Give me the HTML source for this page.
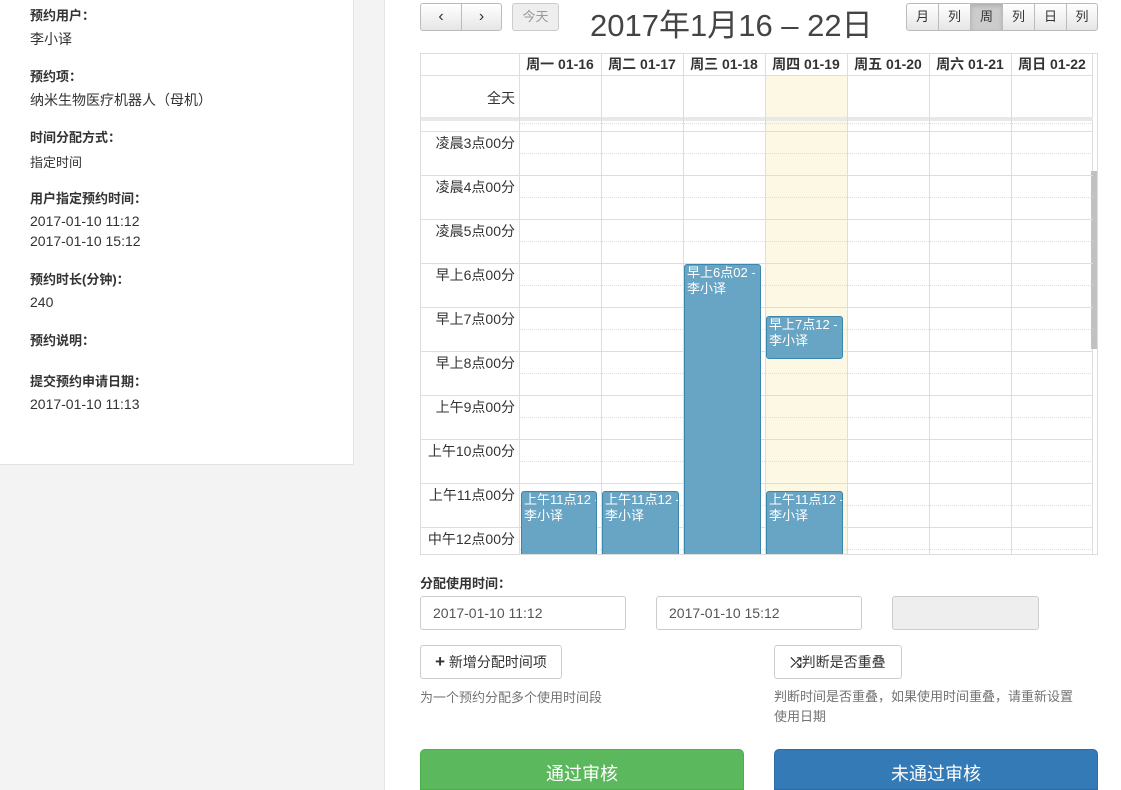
<!DOCTYPE html>
<html style="width:1121px;height:790px;overflow:hidden"><head><meta charset="utf-8"><style>
*{box-sizing:border-box;margin:0;padding:0}
body{width:1121px;height:790px;overflow:hidden;background:#f3f3f3;font-family:"Liberation Sans","Noto Sans CJK SC",sans-serif;color:#333;font-size:14px;position:relative}
.a{position:absolute;white-space:nowrap}
.lp{position:absolute;left:0;top:0;width:354px;height:465px;background:#fff;border-right:1px solid #e3e3e3;border-bottom:1px solid #e3e3e3}
.rp{position:absolute;left:384px;top:0;width:737px;height:790px;background:#fff;border-left:1px solid #e6e6e6}
.b{font-weight:bold;font-size:13px}
.btn{position:absolute;border:1px solid #bbb;border-radius:3px;background:linear-gradient(#fff,#e6e6e6);font-size:13px;text-align:center;color:#333}
.cal{position:absolute;left:420px;top:53px;width:678px;height:502px;border:1px solid #ddd;overflow:hidden}
.vl{position:absolute;top:0;width:1px;height:502px;background:#ddd}
.hl{position:absolute;left:98px;width:574px;height:1px;background:#ddd}
.dl{position:absolute;left:98px;width:574px;height:0;border-top:1px dotted #ddd}
.lbl{position:absolute;left:0;width:94px;text-align:right;font-size:14px;color:#333}
.ev{position:absolute;background:#68a4c4;border:1px solid #3a87ad;border-radius:3px;color:#fff;font-size:13px;line-height:16px;padding:0 2px;overflow:hidden;white-space:nowrap}
.dh{position:absolute;top:0;height:21px;line-height:21px;font-weight:bold;font-size:14px;text-align:center;width:82px}
.inp{position:absolute;height:34px;border:1px solid #ccc;border-radius:3px;padding-left:12px;line-height:32px;font-size:14px;color:#555;background:#fff}
.big{position:absolute;height:42px;border-radius:5px;color:#fff;font-size:18px;text-align:center;line-height:48px}
</style></head><body>
<div class="lp">
<div class="a b" style="left:30px;top:5px">预约用户：</div>
<div class="a" style="left:30px;top:29px">李小译</div>
<div class="a b" style="left:30px;top:66px">预约项：</div>
<div class="a" style="left:30px;top:90px">纳米生物医疗机器人（母机）</div>
<div class="a b" style="left:30px;top:127px">时间分配方式：</div>
<div class="a" style="left:30px;top:152px;font-size:13px">指定时间</div>
<div class="a b" style="left:30px;top:188px">用户指定预约时间：</div>
<div class="a" style="left:30px;top:213px">2017-01-10 11:12</div>
<div class="a" style="left:30px;top:233px">2017-01-10 15:12</div>
<div class="a b" style="left:30px;top:269px">预约时长(分钟)：</div>
<div class="a" style="left:30px;top:294px">240</div>
<div class="a b" style="left:30px;top:330px">预约说明：</div>
<div class="a b" style="left:30px;top:371px">提交预约申请日期：</div>
<div class="a" style="left:30px;top:396px">2017-01-10 11:13</div>
</div>
<div class="rp"></div>

<div class="btn" style="left:420px;top:3px;width:42px;height:28px;line-height:26px;border-radius:3px 0 0 3px;font-size:16px">&#8249;</div>
<div class="btn" style="left:461px;top:3px;width:41px;height:28px;line-height:26px;border-radius:0 3px 3px 0;font-size:16px">&#8250;</div>
<div class="btn" style="left:512px;top:3px;width:47px;height:28px;line-height:26px;color:#999;background:#eee;border-color:#ccc">今天</div>
<div class="a" style="left:590px;top:0px;font-size:31px;color:#444">2017年1月16 – 22日</div>
<div class="btn" style="left:906px;top:3px;width:33px;height:28px;line-height:26px;border-radius:3px 0 0 3px">月</div>
<div class="btn" style="left:938px;top:3px;width:33px;height:28px;line-height:26px;border-radius:0">列</div>
<div class="btn" style="left:970px;top:3px;width:33px;height:28px;line-height:26px;border-radius:0;background:#ccc;box-shadow:inset 0 2px 4px rgba(0,0,0,.15)">周</div>
<div class="btn" style="left:1002px;top:3px;width:33px;height:28px;line-height:26px;border-radius:0">列</div>
<div class="btn" style="left:1034px;top:3px;width:33px;height:28px;line-height:26px;border-radius:0">日</div>
<div class="btn" style="left:1066px;top:3px;width:32px;height:28px;line-height:26px;border-radius:0 3px 3px 0">列</div>

<div class="cal">
<div style="position:absolute;left:344px;top:21px;width:82px;height:481px;background:#fcf8e3"></div>
<div style="position:absolute;left:0;top:63px;width:672px;height:4px;background:#e8e8e8"></div>
<div style="position:absolute;left:0;top:21px;width:672px;height:1px;background:#ddd"></div>
<div style="position:absolute;left:671px;top:67px;width:1px;height:435px;background:#ddd"></div>
<div style="position:absolute;left:671px;top:0;width:1px;height:63px;background:#ddd"></div>
<div style="position:absolute;left:670px;top:117px;width:7px;height:178px;background:#c1c1c1"></div>
<div class="vl" style="left:98px"></div><div class="vl" style="left:180px"></div><div class="vl" style="left:262px"></div><div class="vl" style="left:344px"></div><div class="vl" style="left:426px"></div><div class="vl" style="left:508px"></div><div class="vl" style="left:590px"></div>
<div class="dh" style="left:98px">周一 01-16</div><div class="dh" style="left:180px">周二 01-17</div><div class="dh" style="left:262px">周三 01-18</div><div class="dh" style="left:344px">周四 01-19</div><div class="dh" style="left:426px">周五 01-20</div><div class="dh" style="left:508px">周六 01-21</div><div class="dh" style="left:590px">周日 01-22</div>
<div class="lbl" style="top:34px">全天</div>
<div class="dl" style="top:69px"></div>
<div class="hl" style="top:77px;left:0;width:672px"></div><div class="dl" style="top:99px"></div>
<div class="hl" style="top:121px;left:0;width:672px"></div><div class="dl" style="top:143px"></div>
<div class="hl" style="top:165px;left:0;width:672px"></div><div class="dl" style="top:187px"></div>
<div class="hl" style="top:209px;left:0;width:672px"></div><div class="dl" style="top:231px"></div>
<div class="hl" style="top:253px;left:0;width:672px"></div><div class="dl" style="top:275px"></div>
<div class="hl" style="top:297px;left:0;width:672px"></div><div class="dl" style="top:319px"></div>
<div class="hl" style="top:341px;left:0;width:672px"></div><div class="dl" style="top:363px"></div>
<div class="hl" style="top:385px;left:0;width:672px"></div><div class="dl" style="top:407px"></div>
<div class="hl" style="top:429px;left:0;width:672px"></div><div class="dl" style="top:451px"></div>
<div class="hl" style="top:473px;left:0;width:672px"></div><div class="dl" style="top:495px"></div>
<div class="lbl" style="top:79px">凌晨3点00分</div>
<div class="lbl" style="top:123px">凌晨4点00分</div>
<div class="lbl" style="top:167px">凌晨5点00分</div>
<div class="lbl" style="top:211px">早上6点00分</div>
<div class="lbl" style="top:255px">早上7点00分</div>
<div class="lbl" style="top:299px">早上8点00分</div>
<div class="lbl" style="top:343px">上午9点00分</div>
<div class="lbl" style="top:387px">上午10点00分</div>
<div class="lbl" style="top:431px">上午11点00分</div>
<div class="lbl" style="top:475px">中午12点00分</div>
<div class="ev" style="left:263px;top:210px;width:77px;height:300px">早上6点02 - 下<br>李小译</div>
<div class="ev" style="left:345px;top:262px;width:77px;height:43px">早上7点12 - 早<br>李小译</div>
<div class="ev" style="left:100px;top:437px;width:76px;height:80px">上午11点12 - 下<br>李小译</div>
<div class="ev" style="left:181px;top:437px;width:77px;height:80px">上午11点12 - 下<br>李小译</div>
<div class="ev" style="left:345px;top:437px;width:77px;height:80px">上午11点12 - 下<br>李小译</div>
</div>

<div class="a b" style="left:420px;top:573px">分配使用时间：</div>
<div class="inp" style="left:420px;top:596px;width:206px">2017-01-10 11:12</div>
<div class="inp" style="left:656px;top:596px;width:206px">2017-01-10 15:12</div>
<div class="inp" style="left:892px;top:596px;width:147px;background:#eee"></div>
<div class="btn" style="left:420px;top:645px;width:142px;height:34px;line-height:32px;background:#fff;border-color:#ccc;font-size:14px"><b style="font-size:17px">+</b> 新增分配时间项</div>
<div class="btn" style="left:774px;top:645px;width:128px;height:34px;line-height:32px;background:#fff;border-color:#ccc;font-size:14px"><b>⤮</b>判断是否重叠</div>
<div class="a" style="left:420px;top:687px;color:#737373;font-size:13px">为一个预约分配多个使用时间段</div>
<div class="a" style="left:774px;top:687px;color:#737373;font-size:13px;line-height:20px">判断时间是否重叠，如果使用时间重叠，请重新设置<br>使用日期</div>
<div class="big" style="left:420px;top:749px;width:324px;background:#5cb85c;border:1px solid #4cae4c;height:41px;border-radius:5px 5px 0 0">通过审核</div>
<div class="big" style="left:774px;top:749px;width:324px;background:#337ab7;border:1px solid #2e6da4;height:41px;border-radius:5px 5px 0 0">未通过审核</div>
</body></html>
